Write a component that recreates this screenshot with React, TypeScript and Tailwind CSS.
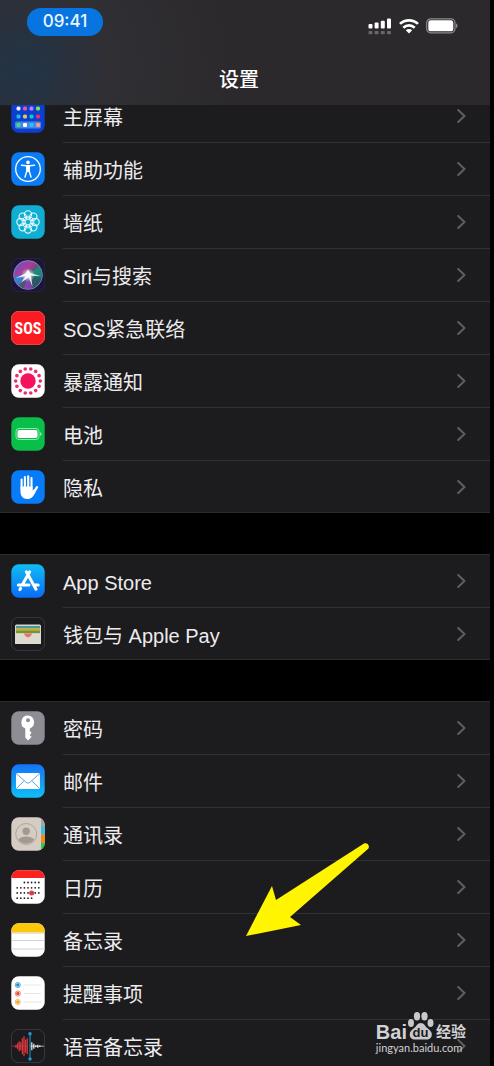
import type { ReactNode } from 'react';

interface SettingsItem {
  label: string;
  icon: ReactNode;
}

function Tile({ fill, stroke, children }: { fill: string; stroke?: string; children?: ReactNode }) {
  return (
    <svg viewBox="0 0 34 34" className="w-[34px] h-[34px] shrink-0" aria-hidden="true">
      <rect x="0.3" y="0.3" width="33.4" height="33.4" rx="7.5" fill={fill} stroke={stroke} strokeWidth={stroke ? 0.8 : 0} />
      {children}
    </svg>
  );
}

const ring = (count: number, radius: number) =>
  Array.from({ length: count }, (_, i) => {
    const angle = (i / count) * Math.PI * 2;
    return { x: 17 + Math.cos(angle) * radius, y: 17 + Math.sin(angle) * radius };
  });

function HomeScreenIcon() {
  const rows = [
    ['#ff453a', '#ffd60a', '#30d158', '#64d2ff'],
    ['#f4f0ff', '#ff4f8b', '#c77dff', '#8be04e'],
    ['#12c4e0', '#e8c65a', '#18c8c0', '#e8306a'],
  ];
  return (
    <Tile fill="#0a3fd0">
      {rows.map((row, r) =>
        row.map((color, c) => (
          <rect key={`${r}-${c}`} x={5.5 + c * 6.5} y={-0.3 + r * 7.9} width="4" height="4" rx="1.5" fill={color} />
        ))
      )}
      <rect x="4" y="22.5" width="26" height="7" rx="1.5" fill="#4a83ea" />
      {['#3ddc84', '#ffffff', '#1cc8f0', '#ff9a76'].map((color, c) => (
        <rect key={color} x={5.5 + c * 6.5} y="24" width="4" height="4" rx="1.2" fill={color} />
      ))}
    </Tile>
  );
}

function AccessibilityIcon() {
  return (
    <Tile fill="#0a7cf6">
      <circle cx="17" cy="17" r="12.3" fill="none" stroke="#fff" strokeWidth="1.3" />
      <circle cx="17" cy="10.4" r="1.8" fill="#fff" />
      <path d="M10.5 13.2l5 .6h3l5-.6M15.8 14v5l-1.8 6M18.2 14v5l1.8 6" fill="none" stroke="#fff" strokeWidth="1.4" strokeLinecap="round" strokeLinejoin="round" />
      <path d="M15.2 13.3h3.6v6.2l-1.8.8-1.8-.8z" fill="#fff" />
    </Tile>
  );
}

function WallpaperIcon() {
  return (
    <Tile fill="#10aed2">
      <g fill="none" stroke="#e4fbff" strokeWidth="1.1">
        {ring(8, 7.6).map((p, i) => (
          <circle key={i} cx={p.x} cy={p.y} r="3.6" />
        ))}
        {ring(8, 4.2).map((p, i) => (
          <circle key={i} cx={p.x} cy={p.y} r="1.7" strokeWidth="0.9" />
        ))}
      </g>
    </Tile>
  );
}

function SiriIcon() {
  return (
    <Tile fill="#1b1638" stroke="#292750">
      <defs>
        <linearGradient id="siri" x1="0" y1="0" x2="1" y2="1">
          <stop offset="0" stopColor="#3f62c8" />
          <stop offset="0.35" stopColor="#b03a9c" />
          <stop offset="0.65" stopColor="#28635f" />
          <stop offset="1" stopColor="#2e3f86" />
        </linearGradient>
        <radialGradient id="siri-glow" cx="0.5" cy="0.5" r="0.5">
          <stop offset="0" stopColor="#fff" />
          <stop offset="0.35" stopColor="#dff4ff" stopOpacity="0.7" />
          <stop offset="1" stopColor="#dff4ff" stopOpacity="0" />
        </radialGradient>
      </defs>
      <circle cx="17" cy="17" r="14.4" fill="url(#siri)" stroke="#a49ac5" strokeWidth="0.7" />
      <path d="M3 18c5 0 9-2 14-1-4 2-6 7-9 10-3-2-5-5-5-9z" fill="#1f8fdd" opacity="0.8" />
      <path d="M17 17l11-9c3 4 4 8 3 12z" fill="#139a88" opacity="0.7" />
      <path d="M17 17l4.500 13c-3 1.500-6 1.500-9 .5z" fill="#a03bc8" opacity="0.75" />
      <circle cx="17" cy="17" r="7" fill="url(#siri-glow)" />
      <path d="M5 20l9.500-4.800L17 11.500l2.500 3.500L29 18l-9-.2 1.500 11-3.800-9.300L10 24.500l4.500-6.300z" fill="#fff" opacity="0.85" />
    </Tile>
  );
}

function SosIcon() {
  return (
    <Tile fill="#fb1b22" stroke="#ff5a55">
      <text x="17" y="22.5" textAnchor="middle" fill="#fff" className="text-[16px] font-bold font-['Liberation_Sans_Narrow','Roboto_Condensed',Roboto,sans-serif]">
        SOS
      </text>
    </Tile>
  );
}

function ExposureIcon() {
  return (
    <Tile fill="#fff">
      <circle cx="17" cy="17" r="7.7" fill="#f6125c" />
      {ring(14, 12.3).map((p, i) => (
        <circle key={i} cx={p.x} cy={p.y} r="1.8" fill="#ee2b6a" />
      ))}
    </Tile>
  );
}

function BatteryIcon() {
  return (
    <Tile fill="#08bf49">
      <rect x="5" y="11.5" width="23" height="11" rx="3" fill="none" stroke="#a4e9b9" strokeWidth="0.9" />
      <rect x="6.5" y="13" width="20" height="8" rx="1.8" fill="#fff" />
      <path d="M29.3 15.2c1.6.5 1.6 3.1 0 3.6z" fill="#d6f5de" />
    </Tile>
  );
}

function PrivacyIcon() {
  return (
    <Tile fill="#087cf8">
      <g stroke="#fff" strokeWidth="2.1" strokeLinecap="round" fill="none">
        <path d="M10.6 9.5V19M13.9 7V18M17.2 6.3V18M20.5 8V19" />
        <path d="M26 17.2l-3.6 5.800" strokeWidth="2.4" />
      </g>
      <path d="M9.5 16.5h12.1v4l1.8-1.5 1 3.2c-2 4-4 6.8-8 6.8-4.6 0-6.9-3.2-6.9-7.5z" fill="#fff" />
    </Tile>
  );
}

function AppStoreIcon() {
  return (
    <Tile fill="url(#store)">
      <defs>
        <linearGradient id="store" x1="0" y1="0" x2="0" y2="1">
          <stop offset="0" stopColor="#10bdf5" />
          <stop offset="1" stopColor="#0a6cf5" />
        </linearGradient>
      </defs>
      <g stroke="#fff" strokeWidth="3" strokeLinecap="round">
        <path d="M18.7 7.8L11.900 19.800M15.3 7.8L25 25.3M7.3 21H18M23.5 21h3.7M9.6 24.4l-.7 1.2" />
      </g>
    </Tile>
  );
}

function WalletIcon() {
  return (
    <Tile fill="#1b1a1e" stroke="#454347">
      <rect x="4" y="7.5" width="26" height="19.5" rx="1.6" fill="#d9d4cb" />
      <path d="M5 9h24v2.5H5z" fill="#459aa1" />
      <path d="M5 11.5h24V14H5z" fill="#d6a62b" />
      <path d="M5 13.7h24v2.5H5z" fill="#669b39" />
      <path d="M4 16.5h8c1.8 0 2 3.8 5 3.8s3.2-3.8 5-3.8h8V26c0 .6-.4 1-1 1H5c-.6 0-1-.4-1-1z" fill="#dfdad1" />
      <path d="M12.5 16.500h9c-1.400 1.200-2 3.800-4.500 3.800s-3.100-2.600-4.500-3.800z" fill="#ed7066" />
    </Tile>
  );
}

function PasswordIcon() {
  return (
    <Tile fill="#8e8d94">
      <path d="M17 4.6a6.7 6.7 0 0 0-2.7 12.8v9.2l2.7 2.9 3.6-3.6-2-2 2-2.1-1.8-1.9v-2.4A6.7 6.7 0 0 0 17 4.6z" fill="#fff" />
      <circle cx="17" cy="9.2" r="2" fill="#8e8d94" />
    </Tile>
  );
}

function MailIcon() {
  return (
    <Tile fill="url(#mail)">
      <defs>
        <linearGradient id="mail" x1="0" y1="0" x2="0" y2="1">
          <stop offset="0" stopColor="#1573f5" />
          <stop offset="1" stopColor="#10bff5" />
        </linearGradient>
      </defs>
      <rect x="5" y="9" width="24" height="16" rx="1.8" fill="#fff" />
      <path d="M5.5 9.8l9.6 8.5c1.2 1 2.6 1 3.8 0l9.6-8.5M5.6 24.3l7.6-7.6M28.4 24.3l-7.6-7.6" fill="none" stroke="#4c9ddf" strokeWidth="0.9" />
    </Tile>
  );
}

function ContactsIcon() {
  return (
    <Tile fill="#d5cdc4">
      <path d="M30 1.400a7.500 7.500 0 0 1 3.700 6.400V9H30z" fill="#a9a49d" />
      <path d="M30 9h3.7v8.500H30z" fill="#3fbbe8" />
      <path d="M30 17.500h3.700V26H30z" fill="#f58a12" />
      <path d="M30 26h3.700a7.500 7.500 0 0 1-3.700 6.600z" fill="#2dc653" />
      <circle cx="15.2" cy="17" r="10.5" fill="none" stroke="#a7a097" strokeWidth="0.9" />
      <circle cx="15.2" cy="14.2" r="3.7" fill="#a29a91" />
      <path d="M7.3 22.5c2-2.2 4.8-3 7.9-3s5.9.8 7.9 3a9.5 9.5 0 0 1-15.8 0z" fill="#a29a91" />
    </Tile>
  );
}

function CalendarIcon() {
  const days = [
    { y: 12.5, from: 2, to: 6 },
    { y: 17.8, from: 0, to: 6 },
    { y: 22.9, from: 0, to: 6 },
    { y: 28.2, from: 0, to: 4 },
  ];
  return (
    <Tile fill="#fff">
      <path d="M.3 8V7.8A7.5 7.5 0 0 1 7.8.3h18.4a7.5 7.5 0 0 1 7.5 7.5V8z" fill="#fc2222" />
      {days.map((row) =>
        Array.from({ length: row.to - row.from + 1 }, (_, i) => (
          <circle key={`${row.y}-${i}`} cx={6.2 + (row.from + i) * 3.6} cy={row.y} r="0.9" fill="#222" />
        ))
      )}
      <circle cx="20.6" cy="22.9" r="2.5" fill="#e9384b" />
    </Tile>
  );
}

function NotesIcon() {
  return (
    <Tile fill="#fff">
      <path d="M.3 9.5V7.8A7.5 7.5 0 0 1 7.8.3h18.4a7.5 7.5 0 0 1 7.5 7.5v1.7z" fill="#fdc80c" />
      <path d="M.5 10.2h33" stroke="#a5a29a" strokeWidth="0.8" strokeDasharray="1 1" />
      <path d="M.5 17.5h33M.5 26h33" stroke="#c9c8cc" strokeWidth="0.8" />
    </Tile>
  );
}

function RemindersIcon() {
  const bullets = [
    { y: 9, color: '#1b8cc4' },
    { y: 17.5, color: '#e8493f' },
    { y: 26, color: '#f2a01c' },
  ];
  return (
    <Tile fill="#fff">
      {bullets.map((b) => (
        <g key={b.color}>
          <circle cx="6.8" cy={b.y} r="2.6" fill="none" stroke={b.color} strokeWidth="0.7" />
          <circle cx="6.8" cy={b.y} r="1.7" fill={b.color} />
          <path d={`M12.5 ${b.y}H30`} stroke="#dcdce0" strokeWidth="0.7" />
        </g>
      ))}
    </Tile>
  );
}

function VoiceMemosIcon() {
  const red = [1.5, 3, 5, 4, 8, 10, 6.5, 8];
  const white = [4, 2.5, 1, 1.5, 0.8];
  return (
    <Tile fill="#1b1a1e" stroke="#474549">
      <path d="M1 17.2h16" stroke="#b93a3c" strokeWidth="0.8" />
      <path d="M19 17.2h14" stroke="#d5d5d8" strokeWidth="0.8" />
      {red.map((h, i) => (
        <path key={i} d={`M${5 + i * 1.6} ${17.2 - h}v${h * 2}`} stroke="#d8383c" strokeWidth="1.3" />
      ))}
      {white.map((h, i) => (
        <path key={i} d={`M${20.8 + i * 2} ${17.2 - h}v${h * 2}`} stroke="#f0f0f2" strokeWidth="1.2" />
      ))}
      <path d="M19 4.5v26" stroke="#249bd2" strokeWidth="1" />
      <circle cx="19" cy="4.8" r="1.7" fill="#249bd2" />
      <circle cx="19" cy="30" r="1.7" fill="#249bd2" />
    </Tile>
  );
}

const GROUPS: SettingsItem[][] = [
  [
    { label: '主屏幕', icon: <HomeScreenIcon /> },
    { label: '辅助功能', icon: <AccessibilityIcon /> },
    { label: '墙纸', icon: <WallpaperIcon /> },
    { label: 'Siri与搜索', icon: <SiriIcon /> },
    { label: 'SOS紧急联络', icon: <SosIcon /> },
    { label: '暴露通知', icon: <ExposureIcon /> },
    { label: '电池', icon: <BatteryIcon /> },
    { label: '隐私', icon: <PrivacyIcon /> },
  ],
  [
    { label: 'App Store', icon: <AppStoreIcon /> },
    { label: '钱包与 Apple Pay', icon: <WalletIcon /> },
  ],
  [
    { label: '密码', icon: <PasswordIcon /> },
    { label: '邮件', icon: <MailIcon /> },
    { label: '通讯录', icon: <ContactsIcon /> },
    { label: '日历', icon: <CalendarIcon /> },
    { label: '备忘录', icon: <NotesIcon /> },
    { label: '提醒事项', icon: <RemindersIcon /> },
    { label: '语音备忘录', icon: <VoiceMemosIcon /> },
  ],
];

function StatusBar() {
  return (
    <div className="flex items-center justify-between pl-[27px] pr-8 pt-2">
      <time className="flex items-center justify-center w-[76px] h-7 rounded-full bg-[#0874df] text-[17px] font-medium text-[#e8f6ff]">
        09:41
      </time>
      <div className="flex items-center gap-[7px] pt-2">
        <svg viewBox="0 0 24 17" className="w-6 h-[17px]" aria-hidden="true">
          <g fill="#fff">
            <rect x="0.5" y="6" width="4" height="4.5" rx="1" />
            <rect x="6.6" y="4.5" width="4" height="6" rx="1" />
            <rect x="12.8" y="2.8" width="4" height="7.7" rx="1" />
            <rect x="19" y="0.5" width="4" height="10" rx="1" />
          </g>
          <g fill="#68676a">
            <rect x="0.5" y="13" width="4" height="3.2" rx="0.8" />
            <rect x="6.6" y="13" width="4" height="3.2" rx="0.8" />
            <rect x="12.8" y="13" width="4" height="3.2" rx="0.8" />
            <rect x="19" y="13" width="4" height="3.2" rx="0.8" />
          </g>
        </svg>
        <svg viewBox="0 0 20 16" className="w-5 h-4" aria-hidden="true">
          <g fill="none" stroke="#fff" strokeWidth="2.700">
            <path d="M1 5.9a13 13 0 0 1 18 0" />
            <path d="M4.3 9.7a8.2 8.2 0 0 1 11.4 0" />
          </g>
          <path d="M6.8 12.3a4.6 4.6 0 0 1 6.4 0L10 15.6z" fill="#fff" />
        </svg>
        <svg viewBox="0 0 32 16" className="w-8 h-4" aria-hidden="true">
          <rect x="0.7" y="0.8" width="28.3" height="14" rx="4" fill="none" stroke="#8c8b8e" strokeWidth="1.2" />
          <rect x="2.3" y="2.3" width="25" height="11" rx="2.6" fill="#fff" />
          <path d="M30 5.5c2 .7 2 4 0 4.7z" fill="#8c8b8e" />
        </svg>
      </div>
    </div>
  );
}

function SettingsRow({ item, first }: { item: SettingsItem; first: boolean }) {
  return (
    <li>
      <a href="#" className="flex items-center h-[53px] pl-[11px]">
        {item.icon}
        <span className={`flex flex-1 items-center justify-between h-full ml-[18px] pr-6 border-t ${first ? 'border-transparent' : 'border-[#323135]'}`}>
          <span className="text-xl leading-7 pt-1">{item.label}</span>
          <svg viewBox="0 0 9 14" className="w-[9px] h-3.5" aria-hidden="true">
            <path d="M1.2 1l6.3 6-6.3 6" fill="none" stroke="#5f5e62" strokeWidth="2" strokeLinecap="round" strokeLinejoin="round" />
          </svg>
        </span>
      </a>
    </li>
  );
}

function Watermark() {
  return (
    <div className="absolute right-7 bottom-2.5 text-[#d2d1d3] font-['Liberation_Sans','Noto_Sans_CJK_SC',sans-serif]">
      <div className="flex items-end h-7">
        <span className="text-xl leading-4 font-bold">Bai</span>
        <svg viewBox="0 0 27 29" className="w-[27px] h-[29px]" aria-hidden="true">
          <g fill="#c9c8ca">
            <ellipse cx="4" cy="12" rx="3" ry="4" />
            <ellipse cx="10" cy="5.2" rx="3.1" ry="4.2" />
            <ellipse cx="17.5" cy="5.2" rx="3.1" ry="4.2" />
            <ellipse cx="23.5" cy="12" rx="3" ry="4" />
            <path d="M13.8 12c-3.3 0-4.2 3-6.6 5-2.6 2.1-4.5 3.5-4.5 6.5 0 3.2 2.3 5 5.4 5h11.4c3.1 0 5.3-1.8 5.3-5 0-3-2-4.4-4.5-6.5-2.4-2-3.2-5-6.5-5z" />
          </g>
          <text x="13.5" y="26" textAnchor="middle" fill="#1c1b1e" className="text-[13px] font-bold">
            du
          </text>
        </svg>
        <span className="text-[15px] leading-4 font-bold ml-0.5">经验</span>
      </div>
      <div className="text-[11px] leading-4 font-[Lato,sans-serif]">jingyan.baidu.com</div>
    </div>
  );
}

export default function App() {
  return (
    <div className="relative flex flex-col h-screen overflow-hidden bg-black pr-1 text-[#ececee] font-[Inter,'Noto_Sans_CJK_SC',sans-serif]">
      <header className="shrink-0 h-[105px] bg-[#2b292b] bg-[radial-gradient(circle_at_5%_65%,#213447_0,#302f34_18%,#2b292b_45%)]">
        <StatusBar />
        <h1 className="pt-7 pr-3 text-center text-xl leading-8 font-medium text-white">设置</h1>
      </header>

      <main className="flex-1 min-h-0 overflow-hidden font-['Liberation_Sans','Noto_Sans_CJK_SC',sans-serif]">
        <div className="flex flex-col gap-[41px] -mt-4">
          {GROUPS.map((items) => (
            <ul key={items[0].label} className="bg-[#1c1b1e] shadow-[inset_0_1px_#2c2b2e,inset_0_-1px_#2c2b2e]">
              {items.map((item, i) => (
                <SettingsRow key={item.label} item={item} first={i === 0} />
              ))}
            </ul>
          ))}
        </div>
      </main>

      {/* callout pointing at the notes row */}
      <svg viewBox="0 0 124 94" className="absolute left-[246px] top-[843px] w-[124px] h-[94px]" aria-hidden="true">
        <path d="M0 93L26 43l4 14L118 .5c3-1.5 6 2 4.5 5L44 74l11 8z" fill="#fff500" />
      </svg>
      <Watermark />
    </div>
  );
}
